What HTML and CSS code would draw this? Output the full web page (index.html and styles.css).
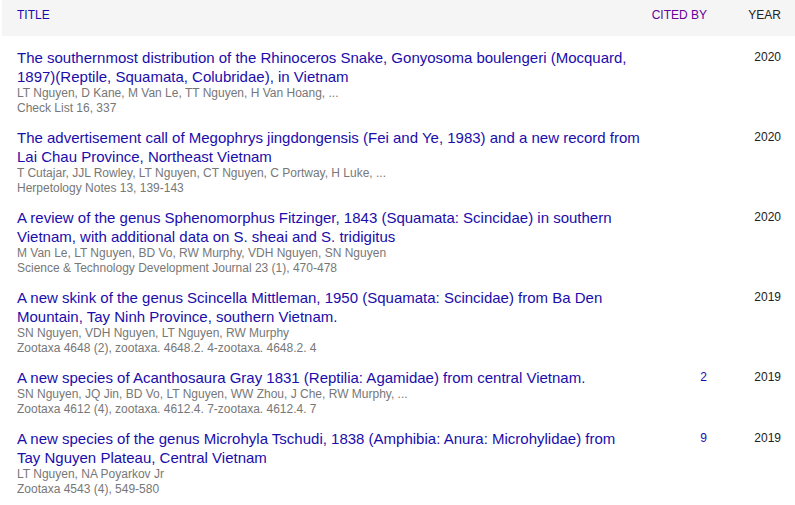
FILE: index.html
```html
<!DOCTYPE html>
<html>
<head>
<meta charset="utf-8">
<link rel="stylesheet" href="styles.css">
</head>
<body>
<div class="table">
  <div class="head">
    <div class="h-title">Title</div>
    <div class="h-cited">Cited by</div>
    <div class="h-year">Year</div>
  </div>

  <div class="row">
    <div class="cell-title">
      <a class="title">The southernmost distribution of the Rhinoceros Snake, Gonyosoma boulengeri (Mocquard, 1897)(Reptile, Squamata, Colubridae), in Vietnam</a>
      <div class="meta">LT Nguyen, D Kane, M Van Le, TT Nguyen, H Van Hoang, ...</div>
      <div class="meta">Check List 16, 337</div>
    </div>
    <div class="cell-cited"></div>
    <div class="cell-year">2020</div>
  </div>

  <div class="row">
    <div class="cell-title">
      <a class="title">The advertisement call of Megophrys jingdongensis (Fei and Ye, 1983) and a new record from Lai Chau Province, Northeast Vietnam</a>
      <div class="meta">T Cutajar, JJL Rowley, LT Nguyen, CT Nguyen, C Portway, H Luke, ...</div>
      <div class="meta">Herpetology Notes 13, 139-143</div>
    </div>
    <div class="cell-cited"></div>
    <div class="cell-year">2020</div>
  </div>

  <div class="row">
    <div class="cell-title">
      <a class="title">A review of the genus Sphenomorphus Fitzinger, 1843 (Squamata: Scincidae) in southern Vietnam, with additional data on S. sheai and S. tridigitus</a>
      <div class="meta">M Van Le, LT Nguyen, BD Vo, RW Murphy, VDH Nguyen, SN Nguyen</div>
      <div class="meta">Science &amp; Technology Development Journal 23 (1), 470-478</div>
    </div>
    <div class="cell-cited"></div>
    <div class="cell-year">2020</div>
  </div>

  <div class="row">
    <div class="cell-title">
      <a class="title">A new skink of the genus Scincella Mittleman, 1950 (Squamata: Scincidae) from Ba Den Mountain, Tay Ninh Province, southern Vietnam.</a>
      <div class="meta">SN Nguyen, VDH Nguyen, LT Nguyen, RW Murphy</div>
      <div class="meta">Zootaxa 4648 (2), zootaxa. 4648.2. 4-zootaxa. 4648.2. 4</div>
    </div>
    <div class="cell-cited"></div>
    <div class="cell-year">2019</div>
  </div>

  <div class="row">
    <div class="cell-title">
      <a class="title">A new species of Acanthosaura Gray 1831 (Reptilia: Agamidae) from central Vietnam.</a>
      <div class="meta">SN Nguyen, JQ Jin, BD Vo, LT Nguyen, WW Zhou, J Che, RW Murphy, ...</div>
      <div class="meta">Zootaxa 4612 (4), zootaxa. 4612.4. 7-zootaxa. 4612.4. 7</div>
    </div>
    <div class="cell-cited"><a class="count">2</a></div>
    <div class="cell-year">2019</div>
  </div>

  <div class="row">
    <div class="cell-title">
      <a class="title">A new species of the genus Microhyla Tschudi, 1838 (Amphibia: Anura: Microhylidae) from Tay Nguyen Plateau, Central Vietnam</a>
      <div class="meta">LT Nguyen, NA Poyarkov Jr</div>
      <div class="meta">Zootaxa 4543 (4), 549-580</div>
    </div>
    <div class="cell-cited"><a class="count">9</a></div>
    <div class="cell-year">2019</div>
  </div>
</div>
</body>
</html>
```

FILE: styles.css
```css
html, body {
  margin: 0;
  padding: 0;
  background: #fff;
}
body {
  font-family: "Liberation Sans", Arial, sans-serif;
}
.table {
  margin-left: 2px;
}
.head,
.row {
  display: grid;
  grid-template-columns: 1fr 66px 88px;
}
.head {
  background: #f5f5f5;
  height: 36px;
  box-sizing: border-box;
  padding-top: 8px;
  font-size: 12px;
  line-height: 14px;
  text-transform: uppercase;
}
.h-title {
  padding-left: 15px;
  color: #1a0dab;
}
.h-cited {
  text-align: right;
  color: #660099;
}
.h-year {
  text-align: right;
  padding-right: 14px;
  color: #222;
}
.row {
  padding-top: 12px;
}
.cell-title {
  padding-left: 15px;
}
.title {
  display: block;
  color: #1a0dab;
  font-size: 15px;
  line-height: 19px;
  text-decoration: none;
}
.meta {
  color: #777;
  font-size: 12px;
  line-height: 15px;
}
.cell-cited {
  text-align: right;
  font-size: 12px;
  line-height: 18px;
}
.count {
  color: #1a0dab;
  text-decoration: none;
}
.cell-year {
  text-align: right;
  padding-right: 14px;
  font-size: 12px;
  line-height: 18px;
  color: #222;
}
```
